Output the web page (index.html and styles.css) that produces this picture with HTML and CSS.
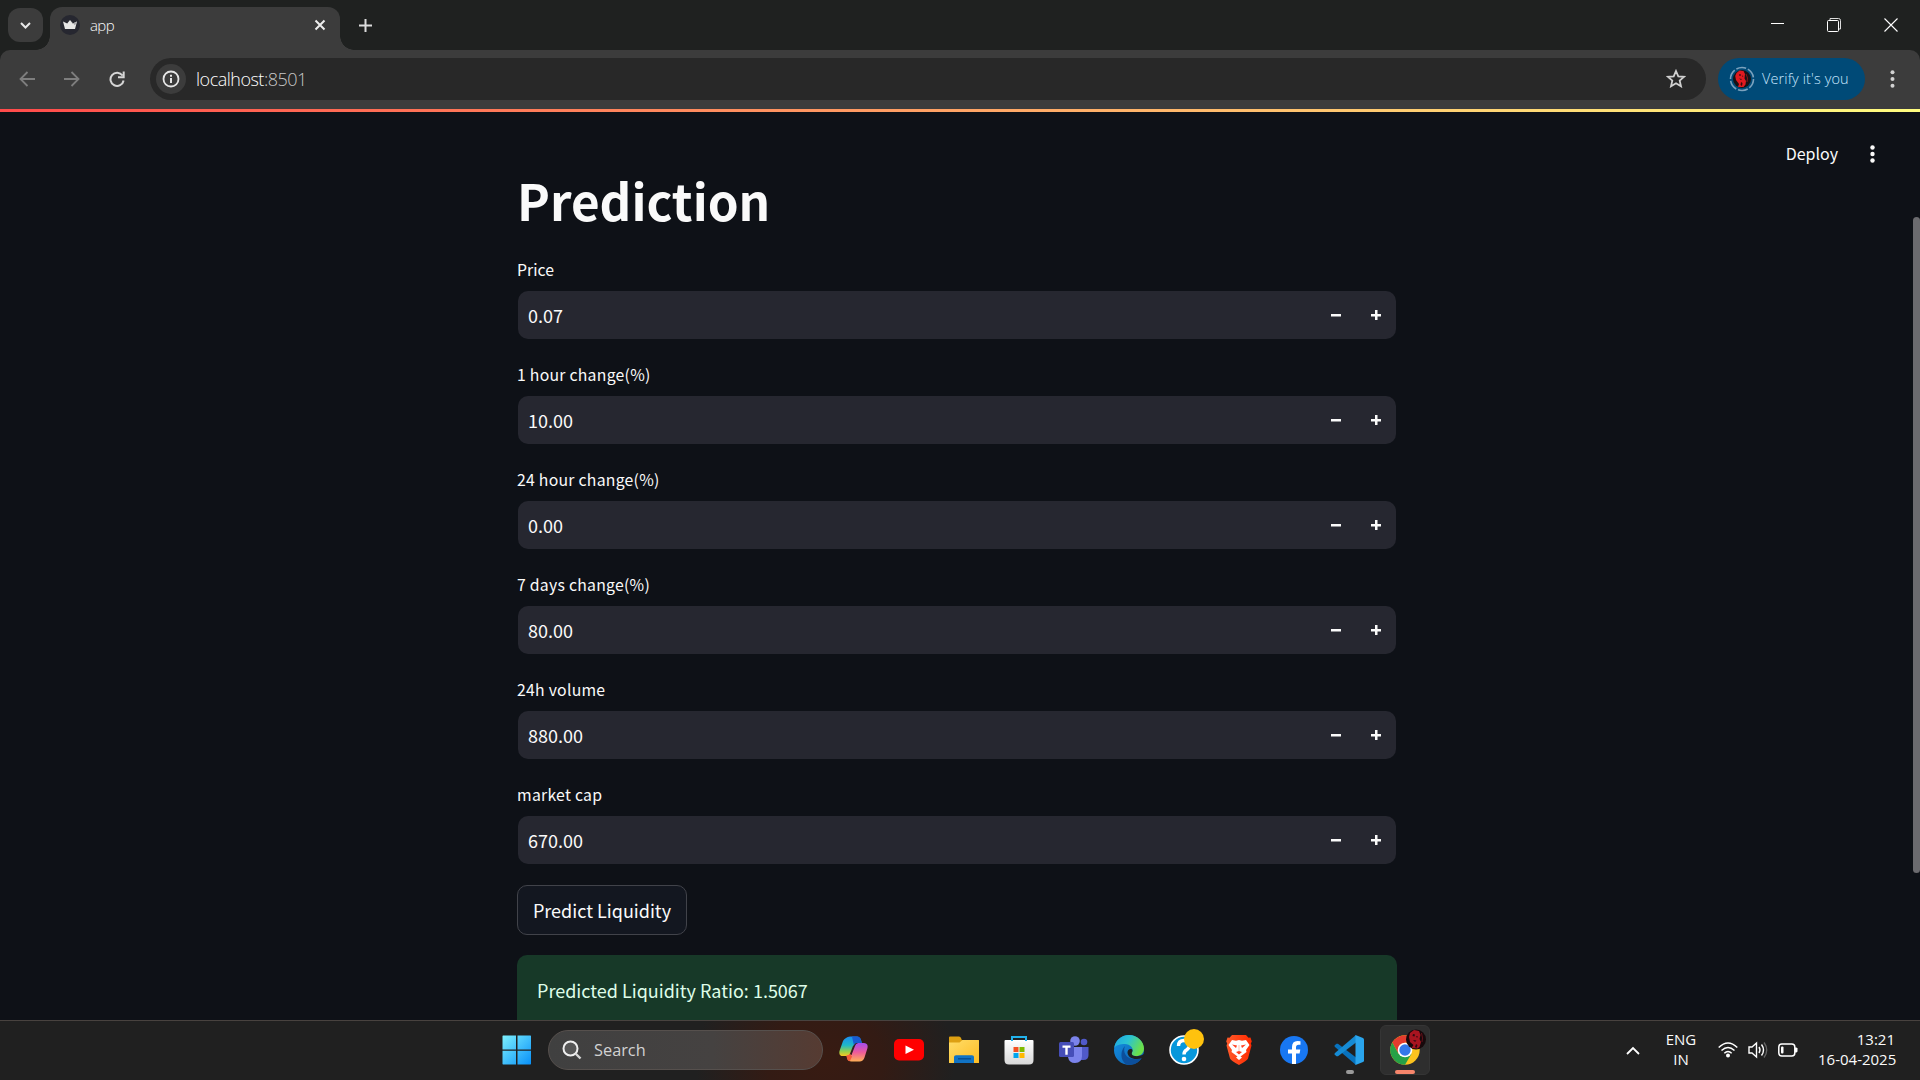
FILE: index.html
```html
<!DOCTYPE html>
<html lang="en">
<head>
<meta charset="utf-8">
<title>app</title>
<link rel="stylesheet" href="styles.css">
</head>
<body>
<div class="screen">
  <header class="tabs">
    <div class="tab-search"><svg width="11" height="7" viewBox="0 0 11 7"><path d="M1 1l4.500 4.500L10 1" fill="none" stroke="#e8e8e8" stroke-width="2"/></svg></div>
    <div class="tab">
      <svg class="favicon" width="20" height="20" viewBox="0 0 20 20"><circle cx="10" cy="10" r="10" fill="#262730"/><path d="M3 6.500l4.200 2L10 5l2.800 3.500 4.200-2-2 7.500H5z" fill="#e6e6e6"/><path d="M10 5l2.800 3.500 4.200-2-2 4z" fill="#a8a8ac"/></svg>
      <span class="tab-title">app</span>
      <svg class="tab-close" width="12" height="12" viewBox="0 0 12 12"><path d="M1.500 1.500l9 9m0-9l-9 9" stroke="#eee" stroke-width="2"/></svg>
    </div>
    <svg class="new-tab" width="13" height="13" viewBox="0 0 13 13"><path d="M6.500 0v13M0 6.500h13" stroke="#dcdcdc" stroke-width="2"/></svg>
    <div class="window-buttons">
      <svg width="14" height="14" viewBox="0 0 14 14"><path d="M1 5.500h13" stroke="#fff"/></svg>
      <svg width="14" height="14" viewBox="0 0 14 14"><path d="M3 2.500V.5h8.500q2 0 2 2V11h-2" fill="none" stroke="#ddd"/><rect x=".5" y="2.500" width="11" height="11" rx="1" fill="none" stroke="#fff"/></svg>
      <svg width="14" height="14" viewBox="0 0 14 14"><path d="M.5.500l13 13m0-13l-13 13" stroke="#fff" stroke-width="1.100"/></svg>
    </div>
  </header>

  <nav class="toolbar">
    <svg class="nav-icon" width="16" height="16" viewBox="0 0 16 16"><path d="M16 8H2M8.500 1L1.500 8l7 7" fill="none" stroke="#7e7e7e" stroke-width="1.800"/></svg>
    <svg class="nav-icon" width="16" height="16" viewBox="0 0 16 16"><path d="M0 8h14M7.500 1l7 7-7 7" fill="none" stroke="#7e7e7e" stroke-width="1.800"/></svg>
    <svg class="nav-icon" width="16" height="16" viewBox="0 0 16 16"><path d="M13.500 4.500A6.600 6.600 0 1 0 14.600 9.500M14.700 0.500v5.800H9" fill="none" stroke="#d6d6d6" stroke-width="2"/></svg>
    <div class="address">
      <span class="site-info"><svg width="18" height="18" viewBox="0 0 18 18"><circle cx="9" cy="9" r="7.500" fill="none" stroke="#e6e6e6" stroke-width="1.800"/><path d="M9 8v5M9 4.800v2" stroke="#e6e6e6" stroke-width="2"/></svg></span>
      <span class="url">localhost<span class="port">:8501</span></span>
      <svg class="star" width="20" height="19" viewBox="0 0 20 19"><path d="M10 2l2.300 5.300 5.700.500-4.300 3.800 1.300 5.700-5-3-5 3 1.300-5.700L2 7.800l5.700-.5z" fill="none" stroke="#d0d0d0" stroke-width="1.800"/></svg>
    </div>
    <div class="profile">
      <svg width="26" height="26" viewBox="0 0 26 26"><circle cx="13" cy="13" r="11.500" fill="none" stroke="#7ba2be" stroke-width="1.600" stroke-dasharray="10 2"/><circle cx="13" cy="13" r="9" fill="#171316"/><path d="M7.500 7l3-2.500 4 .5 1.500 3-.5 4.500L17 15l-.5 3.500-2 2.500H9l1-3-3-4-.8-4z" fill="#e01a20"/><path d="M10.500 8l1.500.5-.5 1.500-1.500-.5zM12.800 9.500l1.500.5-.5 1zM10 12.500l3 .5-1 1zM12 16l1.500 1-.5 3-1.500-1z" fill="#38090d"/><path d="M17 8l1.500 4-.5 4" fill="none" stroke="#8c1418"/></svg>
      <span>Verify it's you</span>
    </div>
    <svg class="menu" width="5" height="18" viewBox="0 0 5 18"><g fill="#d2d2d2"><circle cx="2.500" cy="2.200" r="2"/><circle cx="2.500" cy="9" r="2"/><circle cx="2.500" cy="15.800" r="2"/></g></svg>
  </nav>

  <main class="page">
    <div class="rainbow"></div>
    <div class="app-actions">
      <span>Deploy</span>
      <svg width="5" height="18" viewBox="0 0 5 18"><g fill="#fafafa"><circle cx="2.500" cy="2.500" r="2.200"/><circle cx="2.500" cy="9" r="2.200"/><circle cx="2.500" cy="15.500" r="2.200"/></g></svg>
    </div>
    <div class="scrollbar"></div>
    <section class="content">
      <h1>Prediction</h1>
      <div class="field"><label>Price</label><div class="number"><span>0.07</span><i class="minus"></i><i class="plus"></i></div></div>
      <div class="field"><label>1 hour change(%)</label><div class="number"><span>10.00</span><i class="minus"></i><i class="plus"></i></div></div>
      <div class="field"><label>24 hour change(%)</label><div class="number"><span>0.00</span><i class="minus"></i><i class="plus"></i></div></div>
      <div class="field"><label>7 days change(%)</label><div class="number"><span>80.00</span><i class="minus"></i><i class="plus"></i></div></div>
      <div class="field"><label>24h volume</label><div class="number"><span>880.00</span><i class="minus"></i><i class="plus"></i></div></div>
      <div class="field"><label>market cap</label><div class="number"><span>670.00</span><i class="minus"></i><i class="plus"></i></div></div>
      <button class="predict">Predict Liquidity</button>
      <div class="result">Predicted Liquidity Ratio: 1.5067</div>
    </section>
  </main>

  <footer class="taskbar">
    <svg width="0" height="0" class="defs"><defs>
      <linearGradient id="win" x1="0" y1="0" x2="1" y2="1"><stop offset="0" stop-color="#7df0fd"/><stop offset="1" stop-color="#0890f8"/></linearGradient>
      <linearGradient id="copA" x1="0" y1="0" x2="0" y2="1"><stop offset="0" stop-color="#1b8cf0"/><stop offset=".45" stop-color="#1fb8c8"/><stop offset=".75" stop-color="#8fd050"/><stop offset="1" stop-color="#f8c820"/></linearGradient>
      <linearGradient id="copB" x1="0" y1="0" x2="0" y2="1"><stop offset="0" stop-color="#a34df0"/><stop offset=".5" stop-color="#ee5a9a"/><stop offset="1" stop-color="#ffb056"/></linearGradient>
      <linearGradient id="fold" x1="0" y1="0" x2="1" y2="1"><stop offset="0" stop-color="#ffdd68"/><stop offset="1" stop-color="#fdbc24"/></linearGradient>
      <linearGradient id="bag" x1="0" y1="0" x2="0" y2="1"><stop offset="0" stop-color="#fff"/><stop offset="1" stop-color="#d8d8d8"/></linearGradient>
      <linearGradient id="edgeA" x1="0" y1="0" x2="1" y2=".4"><stop offset="0" stop-color="#1da4e4"/><stop offset=".5" stop-color="#2bc3d2"/><stop offset="1" stop-color="#6be04a"/></linearGradient>
      <linearGradient id="edgeB" x1="0" y1="0" x2="1" y2="1"><stop offset="0" stop-color="#1593e4"/><stop offset="1" stop-color="#0b5cae"/></linearGradient>
      <linearGradient id="brave" x1="0" y1="0" x2="1" y2="0"><stop offset="0" stop-color="#ff5a2a"/><stop offset="1" stop-color="#ff2a00"/></linearGradient>
    </defs></svg>
    <div class="app start"><svg width="30" height="30" viewBox="0 0 30 30"><path d="M1 .5h13v14H.5V1zM15.500.500h13l.5.500v13.500H15.500zM.500 15.800H14v13.700H1l-.5-.5zM15.500 15.800H29V29l-.5.500h-13z" fill="url(#win)"/></svg></div>
    <div class="search">
      <svg width="20" height="20" viewBox="0 0 20 20"><circle cx="8.500" cy="8.500" r="7" fill="#565656" stroke="#efefef" stroke-width="2"/><path d="M13.500 13.500l5 5" stroke="#d8d8d8" stroke-width="2.400"/></svg>
      <span>Search</span>
    </div>
    <div class="app"><svg width="30" height="28" viewBox="0 0 30 28"><path d="M7 2q1.500-1.500 4-1.500h7q3 0 4 3.500l.8 3h-5q-2 0-3 3l-3 8q-.8 2-3.500 2H4q-4.500 0-3.500-5L4 5q1-2 3-3z" fill="url(#copA)"/><path d="M13 .5h5q3 0 4 3.500l.8 3h-5q-2 0-3 2z" fill="#185bd2"/><path d="M7.500 19.500q2.500 0 3.500-2l4-8q1-2.500 4-2.500h6q4.500.500 3.500 5l-3 9.500q-1.300 4-5 4h-8q-3.500 0-4.300-3z" fill="url(#copB)"/><path d="M14 10l3-3h2q-2 0-3 3l-3.500 9h-2z" fill="#34201d"/><path d="M7.500 19.500q2.500 0 3.500-2l2 3-2 4.500q-2.500 0-3-2.500z" fill="#f45b38"/></svg></div>
    <div class="app"><svg width="30" height="22" viewBox="0 0 30 22"><rect width="30" height="21.500" rx="5" fill="#f00"/><path d="M11.500 6.500l8.500 4.300-8.500 4.300z" fill="#fff"/></svg></div>
    <div class="app"><svg width="30" height="28" viewBox="0 0 30 28"><path d="M0 1.500Q0 .5 1 .5h9q1.500 0 2 1.500l.8 2H30v8H0z" fill="#dda012"/><path d="M0 6.500h10.500l3-2.500H29q1 0 1 1v22H0z" fill="url(#fold)"/><path d="M5 27v-6q0-1.800 2-1.800h16q2 0 2 1.800v6z" fill="#1173c4"/><path d="M9 22.800h13" stroke="#054a8c" stroke-width="1.300"/></svg></div>
    <div class="app"><svg width="30" height="30" viewBox="0 0 30 30"><path d="M.500 6q0-1 1-1h27q1 0 1 1v19q0 4.500-4.500 4.500H5q-4.500 0-4.500-4.500z" fill="url(#bag)"/><path d="M8 6V2h14v4" fill="none" stroke="#22b2ec" stroke-width="2"/><path d="M9.500 12h5v5h-5z" fill="#f25022"/><path d="M15.500 12h5v5h-5z" fill="#7fba00"/><path d="M9.500 18h5v5h-5z" fill="#00a4ef"/><path d="M15.500 18h5v5h-5z" fill="#ffb900"/></svg></div>
    <div class="app"><svg width="30" height="28" viewBox="0 0 30 28"><circle cx="16" cy="5" r="4.800" fill="#7b83eb"/><circle cx="25" cy="6" r="3.300" fill="#5059c9"/><path d="M20 11h9.500v8q0 5-5 5H20z" fill="#5059c9"/><path d="M9 11h14v9q0 7-7 7-6 0-7-6z" fill="#7b83eb"/><rect y="6" width="15" height="15" rx="1.500" fill="#464eb8"/><path d="M3.500 9.500h8v2.200H8.700v7H6.300v-7H3.500z" fill="#fff"/></svg></div>
    <div class="app"><svg width="30" height="30" viewBox="0 0 30 30"><circle cx="15" cy="15" r="15" fill="url(#edgeB)"/><path d="M.300 13C1 5.500 7.500 0 15 0c8.500 0 15 6.500 15 13.500 0 5-3.500 7.500-8 7.500-4 0-5.500-1.500-4-3.500C20.500 13.500 16 9 11 9 6 9 2 10 .3 13z" fill="url(#edgeA)"/><path d="M11 11c-3 7 2 16 16.500 12.500-3 4.500-8 6.500-12.500 6.500C7 29 5 17 11 11z" fill="#0c4f9b"/><path d="M17.500 14c2.500 1.500-.5 3.500.5 5.500s7 2.500 11 0c2-1 1 2-.5 3.500-8 3-15-.5-15-5.500 0-2 1.500-4 4-3.500z" fill="#202020"/></svg></div>
    <div class="app help"><svg width="30" height="30" viewBox="0 0 30 30"><circle cx="15" cy="15" r="14" fill="#0797db" stroke="#fff" stroke-width="1.600"/><path d="M9.500 11q0-5.500 5.500-5.500 5.500 0 5.500 4.500 0 3-3 5-2.500 1.500-2.500 4.500" fill="none" stroke="#fff" stroke-width="3.400"/><circle cx="15" cy="24" r="2.300" fill="#fff"/></svg><b class="notice"></b></div>
    <div class="app"><svg width="26" height="30" viewBox="0 0 26 30"><path d="M6 0h14l2.500 2.800 2-.3 1.300 4-1 2 .7 2-3.500 13Q21 25.500 13 30 5 25.500 4 23.500L.5 10.500l.7-2-1-2 1.300-4 2 .3z" fill="url(#brave)"/><path d="M6 5l4 .8 3-.8 3 .8 4-.8 3.500 5-3.500 5 .5 2-4 3-2 1.500 1.500 1L13 25l-3-2.500 1.500-1-2-1.500-4-3 .5-2-3.500-5z" fill="#fff"/><path d="M6 9.500l5 1-1 2.500zM20 9.500l-5 1 1 2.500zM10 17l3-1 3 1-3 2.500z" fill="#ff4020"/><path d="M13 10v6" stroke="#ffc1ae"/></svg></div>
    <div class="app"><svg width="28" height="28" viewBox="0 0 28 28"><circle cx="14" cy="14" r="14" fill="#1877f2"/><path d="M12 28V17.500H8V13.500h4V11q0-6 5.500-6 2 0 3 .3v3.500h-2q-2.500 0-2.500 2.500v2.200h4.300l-.7 4H16V28z" fill="#fff"/></svg></div>
    <div class="app running"><svg width="30" height="30" viewBox="0 0 30 30"><path d="M.500 10.500l2-1.800 1.500.1L22 22.500V30L.7 11.800z" fill="#0872bd"/><path d="M.500 19.500l2 1.800 1.500-.1L22 7.500V0L.7 18.200z" fill="#168bd4"/><path d="M21.500 0l7.500 3q1 .5 1 1.500v21q0 1-1 1.500l-7.500 3z" fill="#2aa5ed"/></svg></div>
    <div class="app active"><svg width="30" height="30" viewBox="0 0 30 30"><circle cx="15" cy="15" r="14.700" fill="#fcc31e"/><path d="M2.300 7.500A14.700 14.700 0 0 1 27.700 7.500H15L8.500 18.700z" fill="#e33b2e"/><path d="M2.300 7.500A14.700 14.700 0 0 0 15 29.700l6.500-11-13 0z" fill="#26a147"/><circle cx="15" cy="15" r="7.300" fill="#fff"/><circle cx="15" cy="15" r="5.700" fill="#3478ea"/></svg>
      <svg class="avatar" width="20" height="21" viewBox="0 0 20 21"><circle cx="10" cy="10.500" r="10" fill="#17080b"/><path d="M4 4l4-3 5 1 1.500 4-1 4 1.500 3-1.500 5-2 1.500-6-.5 2-3-3.500-3-1-5z" fill="#a81420"/><path d="M7 5l2 .5-.5 2-2-.5zM10 7l2 .5-1 1.500zM7 11l3.500.5-1.500 1.500zM10 15l1.500 1-1 3-1.500-1z" fill="#300910"/><path d="M15.500 4l1 5-.5 4" fill="none" stroke="#651019"/></svg></div>
    <div class="tray">
      <svg class="chevron" width="14" height="9" viewBox="0 0 14 9"><path d="M1 8l6-6 6 6" fill="none" stroke="#fff" stroke-width="1.800"/></svg>
      <div class="lang">ENG<br>IN</div>
      <svg class="wifi" width="20" height="16" viewBox="0 0 20 16"><g fill="none" stroke="#fff" stroke-width="1.500"><path d="M.700 5.500Q10-3.500 19.300 5.500M3.500 8.500q6.500-6 13 0M6.300 11.300q3.700-3.500 7.400 0"/></g><circle cx="10" cy="13.500" r="2" fill="#fff"/></svg>
      <svg class="volume" width="20" height="18" viewBox="0 0 20 18"><path d="M1 6h3l4.500-4v14L4 12H1z" fill="none" stroke="#fff" stroke-width="1.400"/><path d="M11 6q2 3 0 6M13.500 3.500q4 5.500 0 11" fill="none" stroke="#fff" stroke-width="1.400"/><path d="M16 1.500q5.500 7.500 0 15" fill="none" stroke="#666" stroke-width="1.300"/></svg>
      <svg class="battery" width="20" height="14" viewBox="0 0 20 14"><rect x=".8" y="1" width="16" height="12" rx="3" fill="none" stroke="#fff" stroke-width="1.500"/><rect x="3" y="3.500" width="2.500" height="7" rx="1" fill="#fff"/><path d="M17 4.500h1.500l1 1v3l-1 1H17z" fill="#fff"/></svg>
      <div class="clock">13:21<br><span>16-04-2025</span></div>
    </div>
  </footer>
</div>
</body>
</html>
```
FILE: styles.css
```css
* { box-sizing: border-box; }
body { margin: 0; background: #0e1117; }
svg { display: block; flex: none; }
.screen {
  width: 1920px; height: 1080px; overflow: hidden;
  display: flex; flex-direction: column;
  background: #1f2120; color: #fafafa;
  font-family: "Open Sans", "Noto Sans", sans-serif;
}

/* browser tabs */
.tabs { height: 50px; flex: none; display: flex; align-items: center; padding: 0 13px 0 8px; }
.tab-search {
  width: 35px; height: 34px; border-radius: 12px; background: #3c3c3c; margin-right: 7px;
  display: grid; place-items: center;
}
.tab {
  position: relative; align-self: flex-end; width: 290px; height: 43px; padding: 0 14px 8px 10px;
  background: #3c3c3c; border-radius: 12px 12px 0 0; display: flex; align-items: center;
}
.tab::before, .tab::after { content: ""; position: absolute; bottom: 0; width: 14px; height: 14px; }
.tab::before { left: -14px; background: radial-gradient(circle at 0 0, transparent 13.5px, #3c3c3c 14px); }
.tab::after { right: -14px; background: radial-gradient(circle at 100% 0, transparent 13.5px, #3c3c3c 14px); }
.tab-title { flex: 1; margin-left: 10px; font-size: 15px; font-weight: 300; line-height: 20px; letter-spacing: -.6px; }
.new-tab { margin-left: 19px; }
.window-buttons { margin-left: auto; display: flex; gap: 43px; padding-right: 9px; }

/* address bar */
.toolbar {
  height: 59px; flex: none; display: flex; align-items: center; padding: 0 25px 2px 19px;
  background: #3c3c3c; border-radius: 10px 10px 0 0;
}
.nav-icon { margin-right: 29px; }
.address {
  width: 1556px; height: 42px; border-radius: 21px; background: #282828; margin-left: -4px;
  display: flex; align-items: center; padding: 0 20px 0 6px;
}
.site-info { width: 30px; height: 30px; border-radius: 50%; background: #3c3c3c; display: grid; place-items: center; }
.url { flex: 1; margin-left: 10px; font-size: 18px; font-weight: 300; letter-spacing: -.5px; color: #fff; }
.port { color: #c7c7c7; }
.profile {
  width: 147px; height: 42px; border-radius: 21px; background: #004a77; color: #c8e7ff; margin-left: 12px;
  display: flex; align-items: center; gap: 7px; padding-left: 11px;
  font-size: 14.500px; font-weight: 300; letter-spacing: .1px; white-space: nowrap;
}
.menu { margin-left: auto; }

/* app page */
.page {
  position: relative; height: 911px; flex: none; overflow: hidden; background: #0e1117;
  font-family: "Noto Sans CJK JP", "Noto Sans", sans-serif;
}
.rainbow { height: 3px; background: linear-gradient(90deg, #ff4b4b, #fffd80); }
.app-actions { position: absolute; right: 45px; top: 30px; height: 30px; display: flex; align-items: center; gap: 32px; font-size: 16px; line-height: 28px; }
.app-actions span { padding-bottom: 2px; }
.scrollbar { position: absolute; right: 0; top: 108px; width: 7px; height: 656px; border-radius: 4px; background: #6b6b6f; }
.content { width: 880px; margin: 0 0 0 517px; display: flex; flex-direction: column; }
h1 { margin: 55px 0 1px; font-size: 49.400px; line-height: 66px; font-weight: 700; height: 66px; }
.field { height: 105px; display: flex; flex-direction: column; justify-content: flex-end; }
label { font-size: 15.800px; line-height: 24px; margin-bottom: 9px; letter-spacing: .25px; }
.field:first-of-type label { letter-spacing: 0; }
.number {
  height: 48px; margin: 0 1px; padding-left: 10px; border-radius: 10px; background: #262730;
  display: flex; align-items: center; font-size: 18px; line-height: 24px;
}
.number span { flex: 1; padding-bottom: 1px; }
.minus, .plus { width: 40px; height: 30px; flex: none; background: linear-gradient(#fafafa, #fafafa) center / 10px 2.500px no-repeat; }
.plus { background: linear-gradient(#fafafa, #fafafa) center / 10px 2.500px no-repeat, linear-gradient(#fafafa, #fafafa) center / 2.500px 10px no-repeat; }
.predict {
  width: 170px; height: 50px; margin: 21px 0 20px; padding: 0; border: 1px solid #41434a; border-radius: 10px;
  background: #131720; color: #fafafa; font: 18px "Noto Sans CJK JP", sans-serif;
}
.result { height: 90px; padding: 20px; border-radius: 10px; background: #173928; color: #dffde9; font-size: 18px; line-height: 30px; }

/* taskbar */
.taskbar {
  position: relative; height: 60px; flex: none; display: flex; align-items: center; padding: 0 0 1px 489px;
  border-top: 1px solid #48423f;
  background: radial-gradient(ellipse 130px 110px at 825px 40px, #381b12, #331b14 45%, transparent), #202020;
}
.defs { position: absolute; }
.app { position: relative; width: 55.100px; height: 50px; display: grid; place-items: center; }
.search {
  width: 275px; height: 40px; margin: 0 3px 0 4px; padding-left: 13px; border-radius: 20px;
  border: 1px solid #56504d; background: linear-gradient(90deg, #404040, #454241 60%, #563b32);
  display: flex; align-items: center; gap: 12px; font-size: 16.300px; color: #d2d2d2;
}
.notice { position: absolute; left: 27px; top: 4px; width: 20px; height: 20px; border-radius: 50%; background: #ffc20e; }
.running::after { content: ""; position: absolute; bottom: 1px; left: 24px; width: 8px; height: 4px; border-radius: 2px; background: #999; }
.active { width: 50px; margin-left: 3px; background: #2e2e2e; border: 1px solid #353535; border-radius: 6px; }
.active::after { content: ""; position: absolute; bottom: 0; left: 14px; width: 20px; height: 4px; border-radius: 2px; background: #f6856b; }
.avatar { position: absolute; left: 25px; top: 3px; }
.tray { margin-left: auto; padding-right: 25px; display: flex; align-items: center; font-size: 15px; line-height: 20px; }
.lang, .clock { padding-bottom: 2px; }
.lang { width: 40px; margin: 0 17px 0 21px; text-align: center; }
.volume { margin-left: 10px; }
.battery { margin-left: 10px; }
.clock { margin-left: 20px; width: 77px; text-align: right; white-space: nowrap; }
```
